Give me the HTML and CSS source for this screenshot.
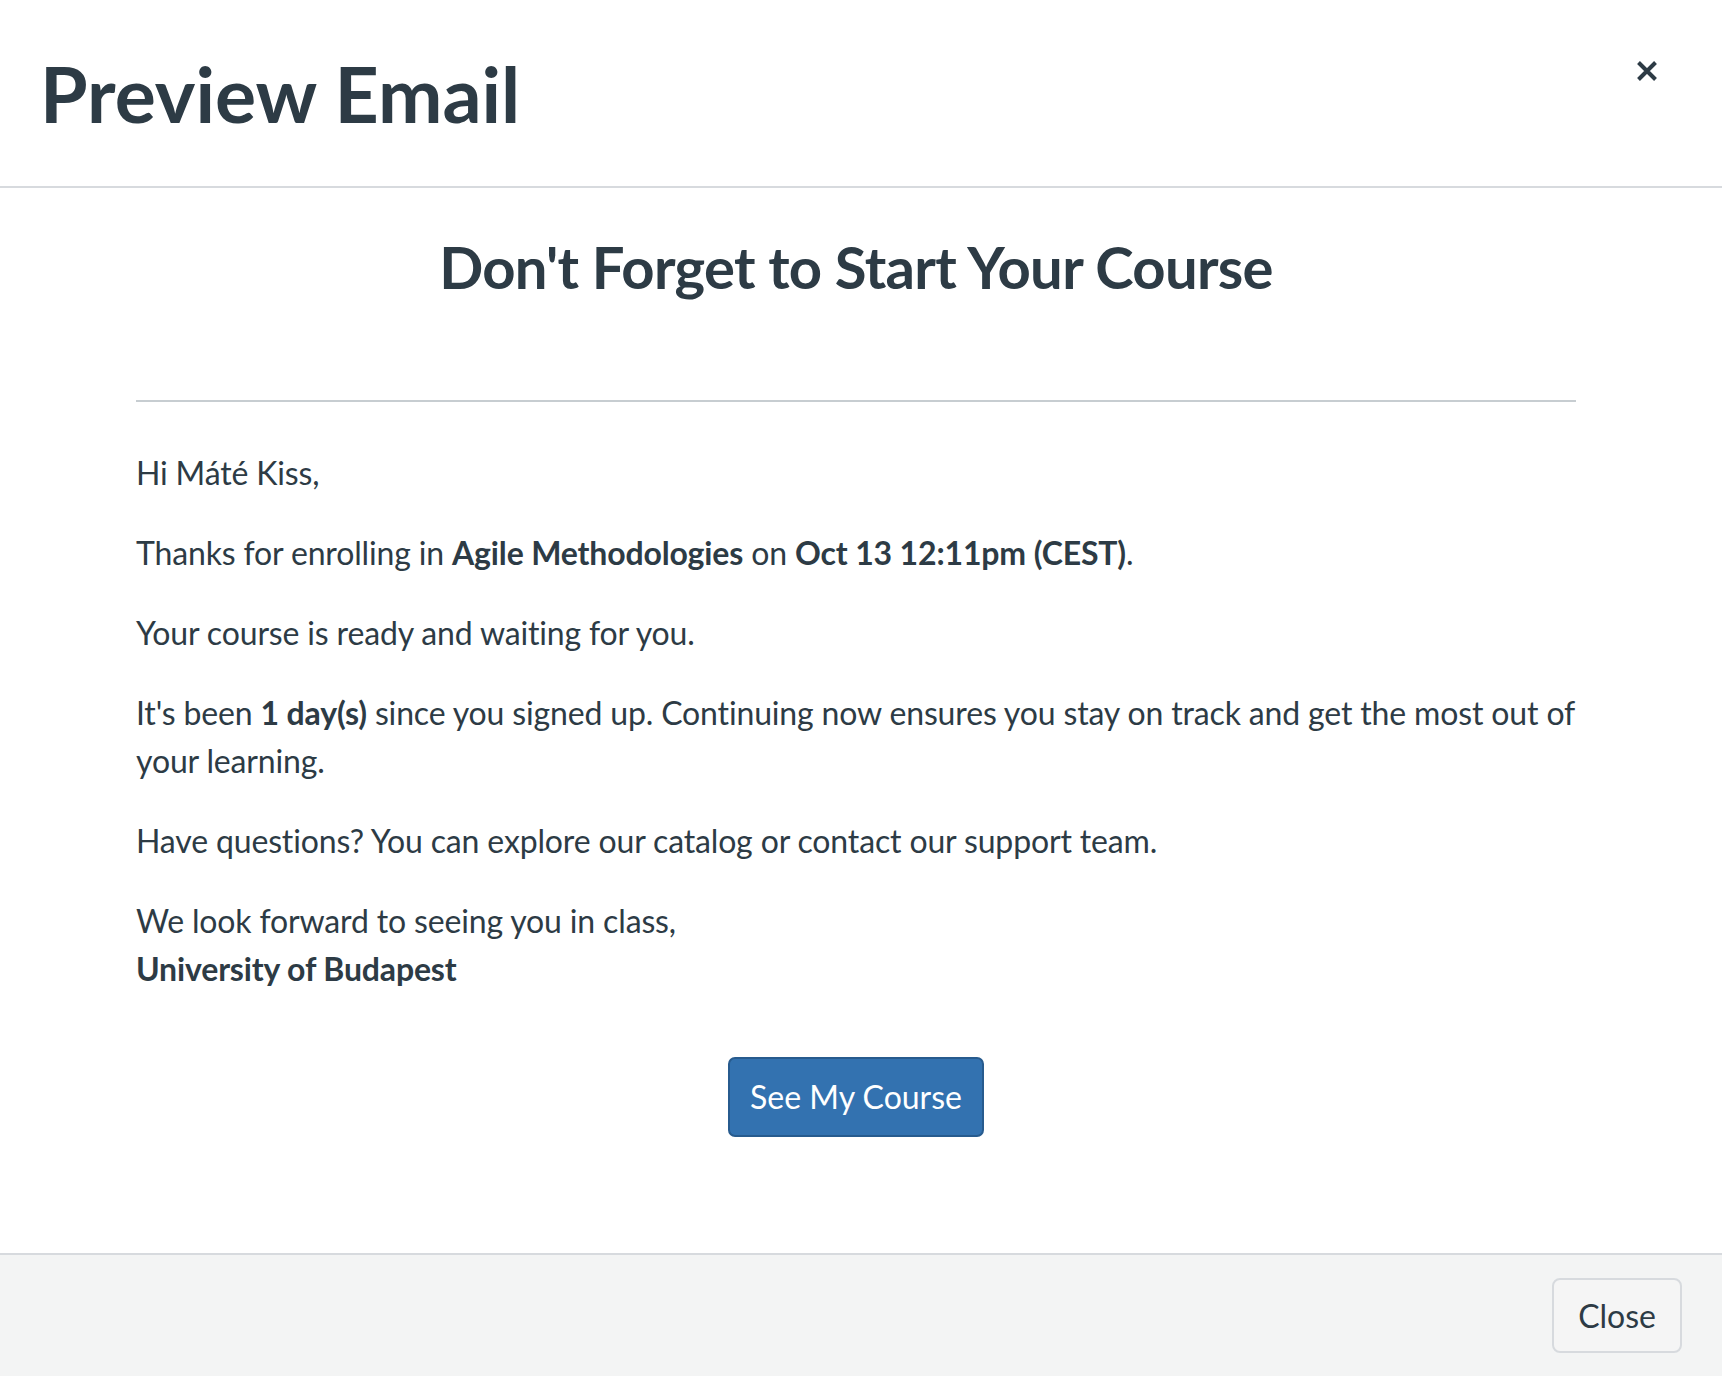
FILE: index.html
```html
<!DOCTYPE html>
<html lang="en">
<head>
    <meta charset="UTF-8">
    <meta name="viewport" content="width=device-width, initial-scale=1.0">
    <title>Preview Email</title>
    <link rel="stylesheet" href="styles.css">
</head>
<body>
    <div class="modal">
        <header class="modal-header">
            <h1>Preview Email</h1>
            <button class="cerrar-x" aria-label="Close">
                <svg viewBox="0 0 22 22" width="22" height="22">
                    <path d="M2.5 2.5 L19.5 19.5 M19.5 2.5 L2.5 19.5" stroke="#2d3b45" stroke-width="4" fill="none"/>
                </svg>
            </button>
        </header>

        <main class="modal-body">
            <div class="email">
                <h2>Don't Forget to Start Your Course</h2>
                <hr>
                <p>Hi Máté Kiss,</p>
                <p>Thanks for enrolling in <strong>Agile Methodologies</strong> on <strong>Oct 13 12:11pm (CEST)</strong>.</p>
                <p>Your course is ready and waiting for you.</p>
                <p>It's been <strong>1 day(s)</strong> since you signed up. Continuing now ensures you stay on track and get the most out of your learning.</p>
                <p>Have questions? You can explore our catalog or contact our support team.</p>
                <p>We look forward to seeing you in class,<br><strong>University of Budapest</strong></p>
                <div class="cta">
                    <a class="btn-curso" href="#">See My Course</a>
                </div>
            </div>
        </main>

        <footer class="modal-footer">
            <button class="btn-cerrar">Close</button>
        </footer>
    </div>
</body>
</html>
```

FILE: styles.css
```css
:root {
    --ink: #2d3b45;
    --line: #d7dade;
    --primary: #3372b0;
}

body {
    margin: 0;
    font-family: Lato, "Noto Sans", sans-serif;
    color: var(--ink);
    background: #fff;
}

.modal {
    height: 100vh;
    display: flex;
    flex-direction: column;
}

.modal-header {
    height: 186px;
    display: flex;
    align-items: center;
    justify-content: space-between;
    padding: 0 64px 0 40px;
    border-bottom: 2px solid var(--line);
    flex-shrink: 0;
}

.modal-header h1 {
    margin: 0;
    font-size: 77px;
    font-weight: 700;
    line-height: 1.2;
}

.cerrar-x {
    border: 0;
    background: none;
    padding: 0;
    margin-top: -44px;
    cursor: pointer;
    display: flex;
}

.modal-body {
    flex: 1;
    padding: 44px 146px 0 136px;
}

.email h2 {
    margin: 0;
    text-align: center;
    font-size: 58px;
    font-weight: 700;
    line-height: 1.2;
    letter-spacing: -0.7px;
}

.email hr {
    border: 0;
    border-top: 2px solid #c7cdd1;
    margin: 98px 0 47px;
}

.email p {
    margin: 0 0 32px;
    font-size: 32px;
    line-height: 48px;
    letter-spacing: -0.15px;
}

.email strong {
    font-weight: 700;
}

.cta {
    display: flex;
    justify-content: center;
    padding-top: 32px;
}

.btn-curso {
    display: inline-block;
    background: var(--primary);
    color: #fff;
    text-decoration: none;
    font-size: 32px;
    line-height: 48px;
    padding: 14px 20px;
    border: 2px solid #275b8e;
    border-radius: 7px;
}

.modal-footer {
    height: 121px;
    flex-shrink: 0;
    display: flex;
    align-items: center;
    justify-content: flex-end;
    padding: 0 40px;
    background: #f3f4f4;
    border-top: 2px solid var(--line);
}

.btn-cerrar {
    font-family: inherit;
    font-size: 32px;
    line-height: 48px;
    color: var(--ink);
    background: #f5f5f5;
    border: 2px solid var(--line);
    border-radius: 8px;
    padding: 12px 24px 11px;
    cursor: pointer;
}
```
